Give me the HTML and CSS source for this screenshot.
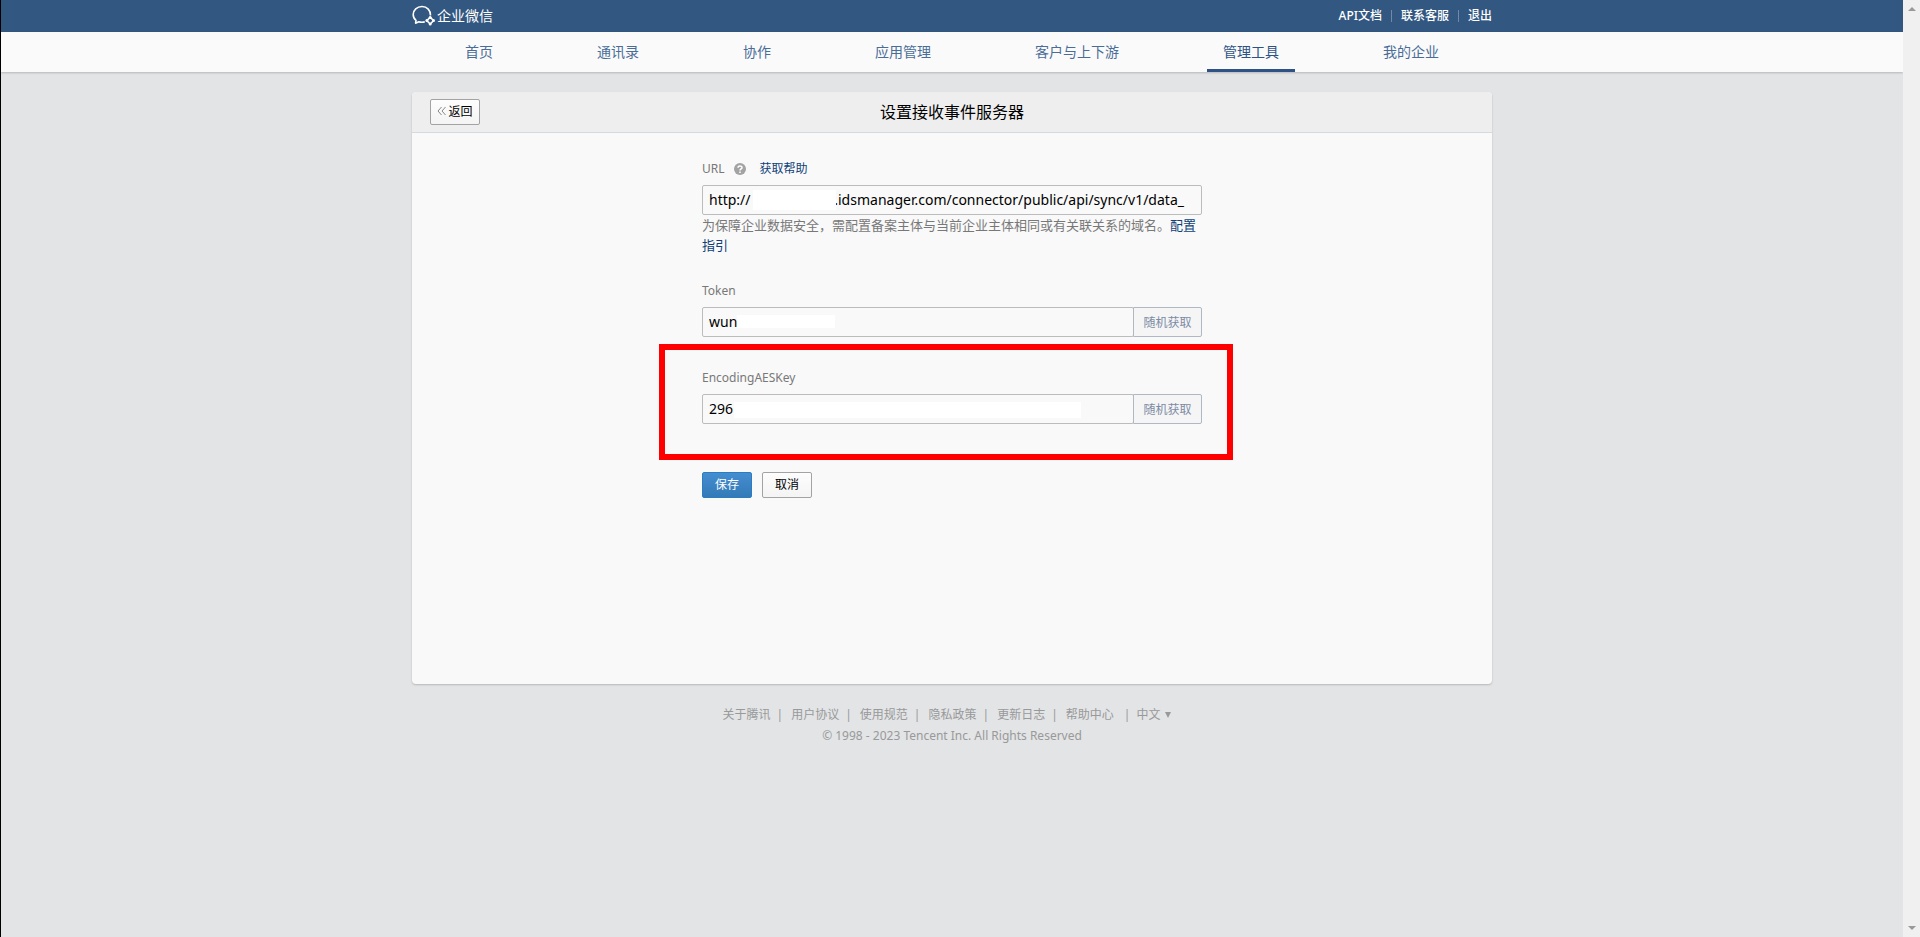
FILE: index.html
```html
<!DOCTYPE html>
<html lang="zh-CN">

<head>
    <meta charset="UTF-8">
    <meta name="viewport" content="width=device-width, initial-scale=1.0">
    <title>企业微信</title>
    <link rel="stylesheet" href="styles.css">
</head>

<body>
    <div class="page">
        <header class="header">
            <div class="container header-inner">
                <a class="logo" href="#">
                    <svg width="24" height="22" viewBox="0 0 24 22" fill="none" stroke="#fff" stroke-linejoin="round">
                        <path d="M18.500 10.500C18.800 5.500 15 1.500 10 1.500C5 1.500 1.200 5 1.200 9.500C1.200 12 2.300 14 4 15.300L3.600 18.200L6.800 16.800C9 17.500 11 17.400 12.800 16.800" stroke-width="1.600" />
                        <path d="M18.200 12.200L21.600 15.600L18.200 19L14.800 15.600Z" stroke-width="1.500" />
                        <g fill="#fff" stroke="none">
                            <circle cx="18.200" cy="12.400" r="1.500" />
                            <circle cx="21.500" cy="15.600" r="1.500" />
                            <circle cx="18.200" cy="18.900" r="1.500" />
                            <circle cx="14.900" cy="15.600" r="1.500" />
                        </g>
                    </svg>
                    <span>企业微信</span>
                </a>
                <div class="header-links">
                    <a href="#">API文档</a>
                    <a href="#">联系客服</a>
                    <a href="#">退出</a>
                </div>
            </div>
        </header>

        <nav class="nav">
            <div class="container nav-inner">
                <a href="#">首页</a>
                <a href="#">通讯录</a>
                <a href="#">协作</a>
                <a href="#">应用管理</a>
                <a href="#">客户与上下游</a>
                <a class="active" href="#">管理工具</a>
                <a href="#">我的企业</a>
            </div>
        </nav>

        <main class="container card">
            <div class="card-head">
                <button class="btn back" type="button">
                    <svg width="9" height="10" viewBox="0 0 9 10" fill="none" stroke="#888">
                        <path d="M4.500 1L1 5L4.500 9M8.500 1L5 5L8.500 9" />
                    </svg>
                    返回
                </button>
                <h1>设置接收事件服务器</h1>
            </div>

            <form class="form">
                <div class="field">
                    <div class="label-row">
                        <label for="url">URL</label>
                        <svg class="help" width="12" height="12" viewBox="0 0 12 12">
                            <circle cx="6" cy="6" r="6" fill="#a3a3a3" />
                            <path d="M4 4.800C4 2.300 8 2.300 8 4.700C8 6 6 6 6 7.500M6 8.500V10" fill="none" stroke="#fff" stroke-width="1.500" />
                        </svg>
                        <a class="help-link" href="#">获取帮助</a>
                    </div>
                    <div class="input-row">
                        <input type="text" id="url" value="http://&nbsp;&nbsp;&nbsp;&nbsp;&nbsp;&nbsp;&nbsp;&nbsp;&nbsp;&nbsp;&nbsp;&nbsp;&nbsp;&nbsp;&nbsp;&nbsp;&nbsp;&nbsp;&nbsp;&nbsp;&nbsp;&nbsp;&nbsp;.idsmanager.com/connector/public/api/sync/v1/data_">
                        <span class="mask mask-url"></span>
                    </div>
                    <p class="hint">为保障企业数据安全，需配置备案主体与当前企业主体相同或有关联关系的域名。<a href="#">配置指引</a></p>
                </div>

                <div class="field token">
                    <div class="label-row"><label for="token">Token</label></div>
                    <div class="input-row">
                        <input type="text" id="token" value="wun">
                        <button class="random" type="button">随机获取</button>
                        <span class="mask mask-token"></span>
                    </div>
                </div>

                <div class="field marked">
                    <div class="label-row"><label for="aeskey">EncodingAESKey</label></div>
                    <div class="input-row">
                        <input type="text" id="aeskey" value="296">
                        <button class="random" type="button">随机获取</button>
                        <span class="mask mask-key"></span>
                    </div>
                </div>

                <div class="actions">
                    <button class="btn primary" type="button">保存</button>
                    <button class="btn" type="button">取消</button>
                </div>
            </form>
        </main>

        <footer class="footer">
            <div class="footer-links">
                <a href="#">关于腾讯</a><i>|</i>
                <a href="#">用户协议</a><i>|</i>
                <a href="#">使用规范</a><i>|</i>
                <a href="#">隐私政策</a><i>|</i>
                <a href="#">更新日志</a><i>|</i>
                <a href="#">帮助中心</a>
                <a class="lang" href="#">中文</a>
            </div>
            <p>© 1998 - 2023 Tencent Inc. All Rights Reserved</p>
        </footer>
    </div>

    <div class="scrollbar"></div>
</body>

</html>
```

FILE: styles.css
```css
* {
    box-sizing: border-box;
}

body {
    margin: 0;
    min-height: 100vh;
    display: flex;
    background-color: #e2e4e6;
    border-left: 1px solid #000;
    font-family: "Noto Sans", "Noto Sans CJK SC", sans-serif;
    font-size: 12px;
    line-height: 20px;
    color: #000;
}

a {
    color: inherit;
    text-decoration: none;
}

button,
input {
    font-family: inherit;
    font-size: 12px;
}

.page {
    flex: 1;
    min-width: 0;
}

.container {
    max-width: 1080px;
    margin: 0 auto;
}

/* top bar */
.header {
    background-color: #325781;
    color: #fff;
}

.header-inner {
    display: flex;
    align-items: center;
    justify-content: space-between;
    height: 32px;
}

.logo {
    display: flex;
    align-items: center;
    gap: 1px;
    font-size: 14px;
}

.header-links {
    display: flex;
    align-items: center;
    font-weight: 500;
}

.header-links a + a {
    position: relative;
    margin-left: 19px;
}

.header-links a + a::before {
    content: "";
    position: absolute;
    left: -10px;
    top: 4px;
    width: 1px;
    height: 12px;
    background-color: #7089a7;
}

/* main navigation */
.nav {
    background-color: #fafafa;
    box-shadow: 0 1px 2px rgba(0, 0, 0, 0.2);
}

.nav-inner {
    display: flex;
    justify-content: center;
    gap: 72px;
}

.nav a {
    height: 40px;
    padding: 0 16px;
    line-height: 40px;
    font-size: 14px;
    color: #4a6d98;
    white-space: nowrap;
}

.nav a.active {
    color: #2e5286;
    border-bottom: 3px solid #2e5286;
}

/* card */
.card {
    min-height: 592px;
    margin-top: 20px;
    background-color: #f9f9f9;
    border-radius: 4px;
    box-shadow: 0 1px 2px rgba(0, 0, 0, 0.2);
}

.card-head {
    display: grid;
    grid-template-columns: 1fr auto 1fr;
    align-items: center;
    height: 41px;
    padding: 0 18px;
    background-color: #eee;
    border-bottom: 1px solid #d3dbe1;
    border-radius: 4px 4px 0 0;
}

.card-head h1 {
    margin: 0;
    font-size: 16px;
    font-weight: 400;
}

.btn {
    width: 50px;
    height: 26px;
    padding: 0 0 2px;
    border: 1px solid #a3a3a3;
    border-radius: 2px;
    background: linear-gradient(#fdfdfd, #f4f4f4);
    color: #000;
}

.back {
    display: flex;
    align-items: center;
    justify-content: center;
    gap: 2px;
}

.primary {
    border-color: #2b7cc0;
    background: linear-gradient(#448dd0, #337ab7);
    color: #fff;
}

/* form */
.form {
    width: 500px;
    margin: 0 auto;
    padding-top: 26px;
}

.label-row {
    display: flex;
    align-items: center;
    height: 20px;
    margin-bottom: 6px;
    font-size: 12px;
    color: #787878;
}

.help {
    margin: 0 14px 0 9px;
}

.help-link,
.hint a {
    color: #0f4078;
}

.input-row {
    position: relative;
    display: flex;
}

.input-row input {
    flex: 1;
    min-width: 0;
    height: 30px;
    padding: 0 6px 2px;
    border: 1px solid #bcbcbc;
    border-radius: 2px;
    background-color: #f9f9f9;
    font-size: 14px;
    line-height: 20px;
    color: #000;
}

.random {
    width: 69px;
    height: 30px;
    margin-left: -1px;
    padding: 0;
    border: 1px solid #b0b8c4;
    border-radius: 0 2px 2px 0;
    background-color: #f5f5f5;
    color: #7c8ba5;
}

/* hidden part of a value */
.mask {
    position: absolute;
    background-color: #fff;
}

.mask-url {
    left: 51px;
    top: 5px;
    width: 83px;
    height: 20px;
}

.mask-token {
    left: 35px;
    top: 8px;
    width: 98px;
    height: 13px;
}

.mask-key {
    left: 32px;
    top: 8px;
    width: 347px;
    height: 16px;
}

.hint {
    margin: 0;
    font-size: 13px;
    line-height: 20px;
    color: #787878;
}

.token {
    margin-top: 26px;
}

.marked {
    margin: 7px -31px 0 -43px;
    padding: 18px 25px 30px 37px;
    border: 6px solid #f00;
}

.actions {
    display: flex;
    gap: 10px;
    margin-top: 12px;
}

/* footer */
.footer {
    margin-top: 20px;
    color: #999;
    text-align: center;
}

.footer-links {
    display: flex;
    justify-content: center;
    padding-right: 10px;
    line-height: 22px;
}

.footer-links i {
    margin: 0 8px 0 6px;
    font-style: normal;
}

.footer-links .lang {
    display: flex;
    align-items: center;
}

.lang::before {
    content: "|";
    margin: 0 6px 0 10px;
}

.lang::after {
    content: "";
    margin-left: 5px;
    border: 3px solid transparent;
    border-top: 6px solid #999;
    border-bottom: 0;
}

.footer p {
    margin: 0;
}

.scrollbar {
    display: flex;
    flex-direction: column;
    justify-content: space-between;
    align-items: center;
    width: 17px;
    padding: 7px 0;
    background-color: #f0f0f0;
}

.scrollbar::before,
.scrollbar::after {
    content: "";
    border: 4px solid transparent;
}

.scrollbar::before {
    border-bottom-color: #999;
    border-top: 0;
}

.scrollbar::after {
    border-top-color: #999;
    border-bottom: 0;
}
```
